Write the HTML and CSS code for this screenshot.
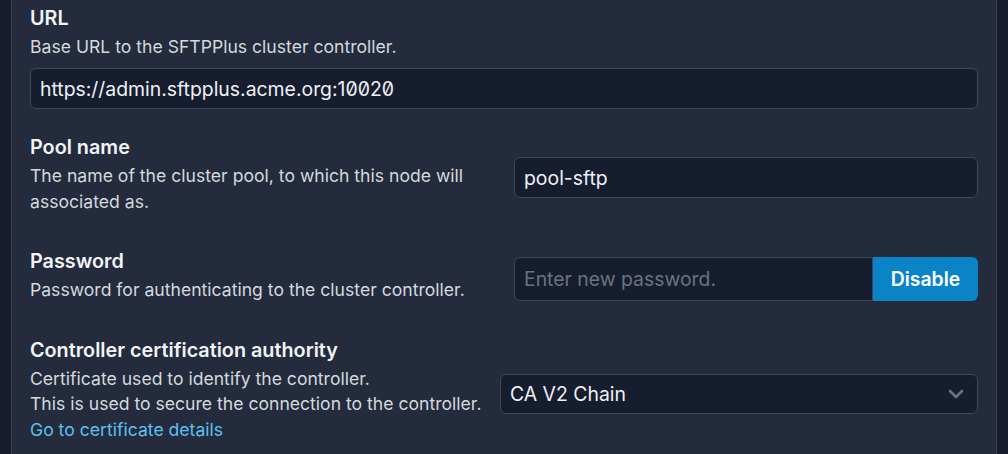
FILE: index.html
```html
<!DOCTYPE html>
<html lang="en">
<head>
<meta charset="utf-8">
<title>Cluster settings</title>
<link rel="stylesheet" href="styles.css">
</head>
<body>
<div class="page">
  <div class="panel">
    <div class="field">
      <div class="label">URL</div>
      <div class="desc">Base URL to the SFTPPlus cluster controller.</div>
      <input class="input input-full" type="text" value="https://admin.sftpplus.acme.org:10020">
    </div>

    <div class="row">
      <div class="info">
        <div class="label">Pool name</div>
        <div class="desc">The name of the cluster pool, to which this node will associated as.</div>
      </div>
      <div class="control">
        <input class="input" type="text" value="pool-sftp">
      </div>
    </div>

    <div class="row">
      <div class="info">
        <div class="label">Password</div>
        <div class="desc">Password for authenticating to the cluster controller.</div>
      </div>
      <div class="control">
        <div class="group">
          <input class="input input-group" type="password" placeholder="Enter new password.">
          <button class="btn" type="button">Disable</button>
        </div>
      </div>
    </div>

    <div class="row">
      <div class="info info-fill">
        <div class="label">Controller certification authority</div>
        <div class="desc nowrap">Certificate used to identify the controller.<br>This is used to secure the connection to the controller.</div>
        <a class="link" href="#">Go to certificate details</a>
      </div>
      <div class="control control-wide">
        <div class="select">
          <span class="select-value">CA V2 Chain</span>
          <svg class="chevron" width="16" height="10" viewBox="0 0 16 10"><path d="M2 2 L8 8 L14 2" fill="none" stroke="#6b7280" stroke-width="2.6" stroke-linecap="round" stroke-linejoin="round"/></svg>
        </div>
      </div>
    </div>
  </div>
</div>
</body>
</html>
```

FILE: styles.css
```css
html, body {
  margin: 0;
  padding: 0;
  background: #161c2a;
  height: 100%;
  overflow: hidden;
}
body {
  font-family: Inter, "Noto Sans", sans-serif;
  color: #e5e7eb;
}
.page {
  padding-left: 11px;
  padding-right: 11px;
  height: 100%;
}
.panel {
  background: #232b3c;
  border-left: 1px solid #374151;
  border-right: 1px solid #374151;
  padding: 3.5px 18px 0 18px;
  height: 100%;
  box-sizing: border-box;
}
.label {
  font-size: 19.8px;
  font-weight: 600;
  line-height: 28px;
  color: #f1f3f6;
}
.desc {
  font-size: 17.6px;
  line-height: 25.6px;
  color: #d5d9df;
  margin-top: 2px;
}
.nowrap {
  white-space: nowrap;
}
.field {
  margin-bottom: 24px;
}
.field .input {
  margin-top: 9px;
}
.input {
  display: block;
  box-sizing: border-box;
  width: 100%;
  height: 41px;
  background: #161d2e;
  border: 1px solid #3f4859;
  border-radius: 6px;
  color: #eef1f5;
  font-family: Inter, "Noto Sans", sans-serif;
  font-size: 19.4px;
  font-feature-settings: "zero" 1;
  padding: 0 9px;
  outline: none;
}
.input::placeholder {
  color: #6b7280;
}
.row {
  display: flex;
  align-items: center;
  justify-content: space-between;
  gap: 24px;
  margin-bottom: 25px;
}
.info {
  flex: 0 1 459px;
  padding-bottom: 8px;
}
.info-fill {
  flex: 1 1 auto;
  min-width: 0;
}
.control {
  flex: 0 0 464px;
}
.control-wide {
  flex: 0 0 478px;
  padding-top: 1px;
}
.group {
  display: flex;
  align-items: stretch;
}
.input-group {
  flex: 1;
  height: 44px;
  border-radius: 6px 0 0 6px;
}
.btn {
  flex: 0 0 105px;
  height: 44px;
  border: none;
  border-radius: 0 6px 6px 0;
  background: #0a84c7;
  color: #ffffff;
  font-family: Inter, "Noto Sans", sans-serif;
  font-size: 19.4px;
  font-weight: 600;
  padding: 0;
}
.link {
  display: block;
  font-size: 17.6px;
  line-height: 25.6px;
  color: #5ec0f2;
  text-decoration: none;
}
.select {
  display: flex;
  align-items: center;
  justify-content: space-between;
  box-sizing: border-box;
  height: 40px;
  background: #161d2e;
  border: 1px solid #3f4859;
  border-radius: 6px;
  padding: 0 13px 0 9px;
  font-size: 19.4px;
  color: #eef1f5;
}
.chevron {
  display: block;
}
```
